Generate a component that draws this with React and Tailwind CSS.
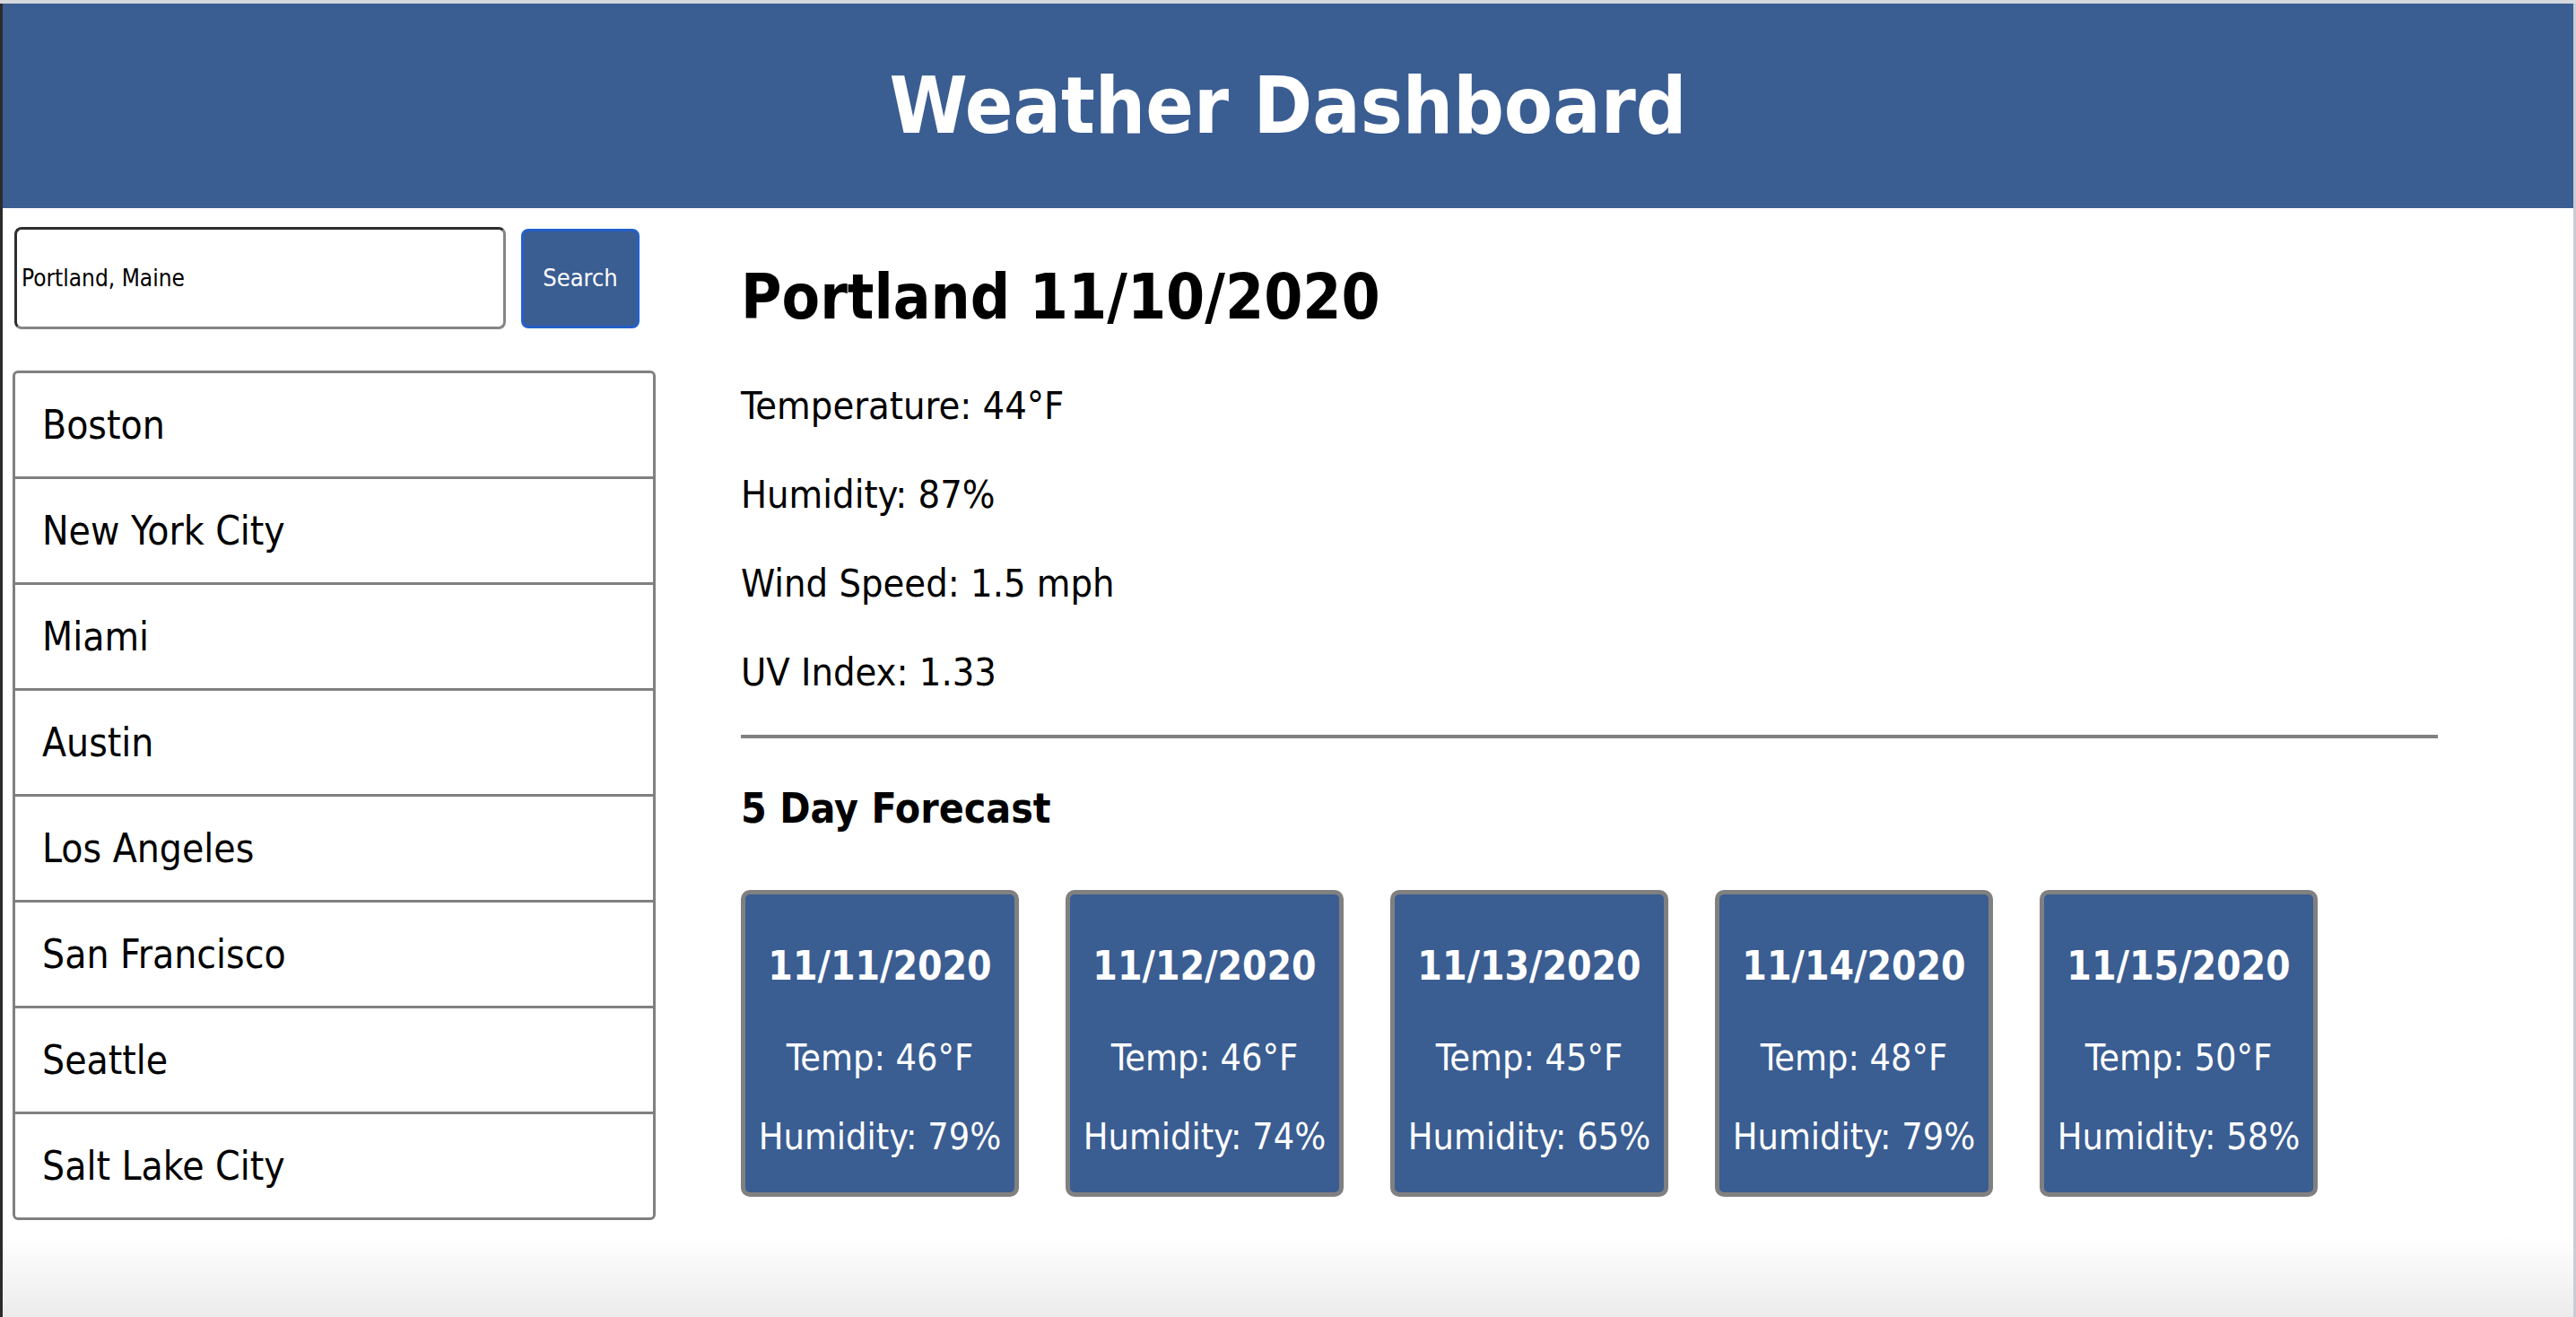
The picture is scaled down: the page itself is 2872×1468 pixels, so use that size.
const cities = [
  "Boston",
  "New York City",
  "Miami",
  "Austin",
  "Los Angeles",
  "San Francisco",
  "Seattle",
  "Salt Lake City",
];

const forecast = [
  { date: "11/11/2020", temp: 46, hum: 79 },
  { date: "11/12/2020", temp: 46, hum: 74 },
  { date: "11/13/2020", temp: 45, hum: 65 },
  { date: "11/14/2020", temp: 48, hum: 79 },
  { date: "11/15/2020", temp: 50, hum: 58 },
];

export default function App() {
  return (
    <div className="w-[2872px] h-[1468px] bg-white flex flex-col overflow-hidden text-black [font-family:'DejaVu_Sans_Condensed','DejaVu_Sans',sans-serif]">
      <div className="h-[4px] shrink-0 bg-[#d5d8dc]" />
      <div className="flex-1 flex flex-col border-l-[3px] border-l-[#2b2b2b] border-r-[3px] border-r-[#c9cdd3]">
        <header className="h-[228px] shrink-0 bg-[#3a5d92] flex items-center justify-center">
          <h1 className="text-white font-bold text-[88px] leading-none">Weather Dashboard</h1>
        </header>

        <div className="flex h-[1146px] shrink-0">
          <aside className="w-[728px] shrink-0 pl-[11px] pt-[21px]">
            <div className="flex items-center gap-[17px] ml-[2px]">
              <input
                readOnly
                value="Portland, Maine"
                className="w-[548px] h-[114px] border-[3px] border-t-[#2e2e2e] border-l-[#2e2e2e] border-b-[#858585] border-r-[#858585] rounded-[8px] pl-[5px] text-[26px] text-black outline-none bg-white"
              />
              <button className="w-[132px] h-[111px] bg-[#3a5d92] border-[3px] border-[#2460c8] rounded-[8px] text-white text-[27px]">
                Search
              </button>
            </div>
            <ul className="mt-[46px] w-[717px] border-[3px] border-[#808080] rounded-[6px]">
              {cities.map((c, i) => (
                <li
                  key={c}
                  className={
                    "flex items-center pl-[30px] text-[44px] " +
                    (i < cities.length - 1 ? "h-[118px] border-b-[3px] border-[#808080]" : "h-[115px]")
                  }
                >
                  {c}
                </li>
              ))}
            </ul>
          </aside>

          <main className="pl-[95px] pt-[59px] flex flex-col">
            <h2 className="text-[69px] font-bold leading-[80px]">Portland 11/10/2020</h2>
            <p className="mt-[56px] text-[43px] leading-[50px]">Temperature: 44°F</p>
            <p className="mt-[49px] text-[43px] leading-[50px]">Humidity: 87%</p>
            <p className="mt-[49px] text-[43px] leading-[50px]">Wind Speed: 1.5 mph</p>
            <p className="mt-[49px] text-[43px] leading-[50px]">UV Index: 1.33</p>
            <div className="mt-[45px] h-[4px] w-[1892px] bg-[#808080]" />
            <h3 className="mt-[50px] text-[46px] font-bold leading-[56px]">5 Day Forecast</h3>
            <div className="mt-[63px] flex gap-[52px]">
              {forecast.map((f) => (
                <div
                  key={f.date}
                  className="w-[310px] h-[342px] border-[5px] border-[#808080] rounded-[10px] bg-[#3a5d92] text-white flex flex-col items-center pt-[55px]"
                >
                  <div className="text-[44px] font-bold leading-[50px]">{f.date}</div>
                  <div className="mt-[52px] text-[41px] leading-[50px]">Temp: {f.temp}°F</div>
                  <div className="mt-[38px] text-[41px] leading-[50px]">Humidity: {f.hum}%</div>
                </div>
              ))}
            </div>
          </main>
        </div>

        <div className="flex-1 bg-linear-to-b from-white to-[#ebebeb]" />
      </div>
    </div>
  );
}
